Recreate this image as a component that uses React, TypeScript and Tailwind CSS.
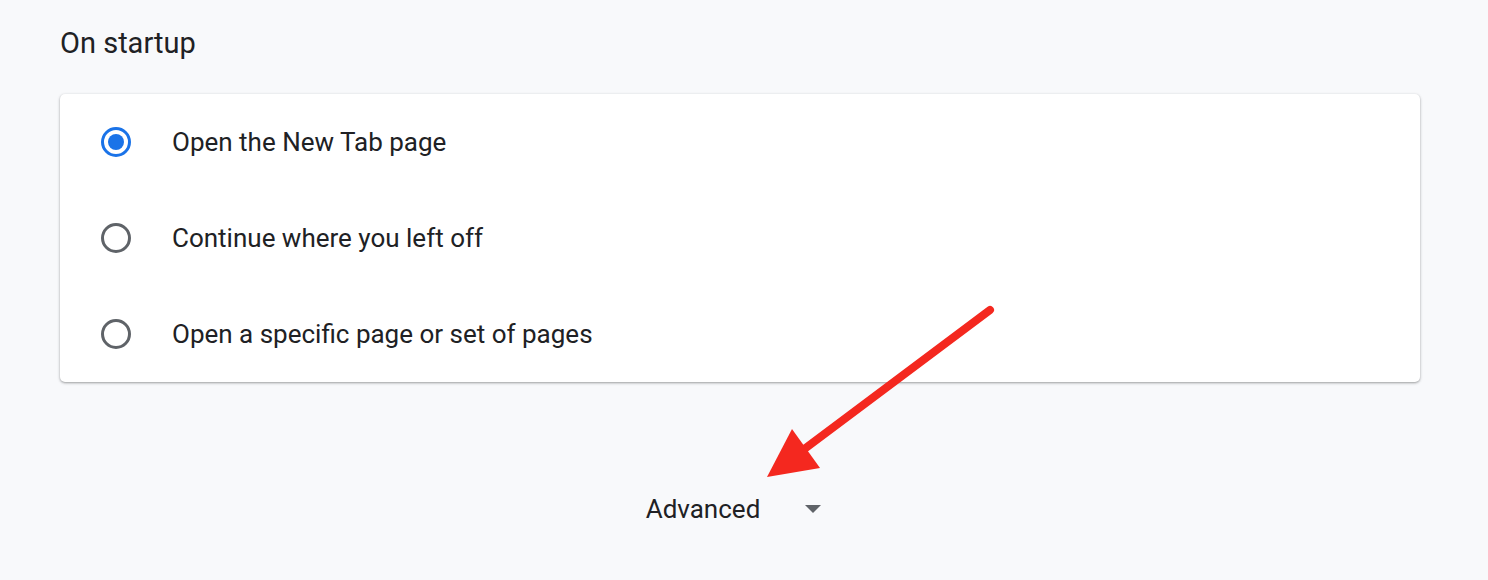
const options = [
  { label: "Open the New Tab page", checked: true },
  { label: "Continue where you left off", checked: false },
  { label: "Open a specific page or set of pages", checked: false },
];

const Radio = ({ checked }: { checked: boolean }) =>
  checked ? (
    <span className="flex h-[30px] w-[30px] items-center justify-center rounded-full border-[3px] border-[#1a73e8]">
      <span className="h-[16px] w-[16px] rounded-full bg-[#1a73e8]" />
    </span>
  ) : (
    <span className="h-[30px] w-[30px] rounded-full border-[3px] border-[#5f6368]" />
  );

export default function App() {
  return (
    <div className="relative h-[580px] w-full overflow-hidden bg-[#f8f9fb] font-['Roboto',sans-serif] text-[#202124]">
      <div className="pl-[60px] pr-[68px] pt-[26px]">
        <h2 className="text-[29px] leading-[34px]">On startup</h2>

        {/* startup options card */}
        <div className="mt-[34px] rounded-[5px] bg-white py-[24px] shadow-[0_1px_3px_rgba(60,64,67,0.35),0_1px_2px_rgba(60,64,67,0.2)]">
          {options.map((opt, i) => (
            <div
              key={opt.label}
              className={`flex h-[48px] items-center pl-[41px] ${i > 0 ? "mt-[48px]" : ""}`}
            >
              <Radio checked={opt.checked} />
              <span className="ml-[41px] text-[26px] leading-none">{opt.label}</span>
            </div>
          ))}
        </div>

        <div className="mt-[114px] flex justify-center pr-[13px]">
          <button className="flex items-center gap-[45px] text-[26px] leading-none">
            Advanced
            <svg width="16" height="9" viewBox="0 0 16 9">
              <path d="M0 0h16L8 8z" fill="#5f6368" />
            </svg>
          </button>
        </div>
      </div>

      {/* red annotation arrow */}
      <svg className="pointer-events-none absolute left-0 top-0" width="1488" height="580">
        <line x1="990" y1="310" x2="795" y2="456" stroke="#f4281f" strokeWidth="8" strokeLinecap="round" />
        <polygon points="767,477 792,429 820,468" fill="#f4281f" />
      </svg>
    </div>
  );
}
